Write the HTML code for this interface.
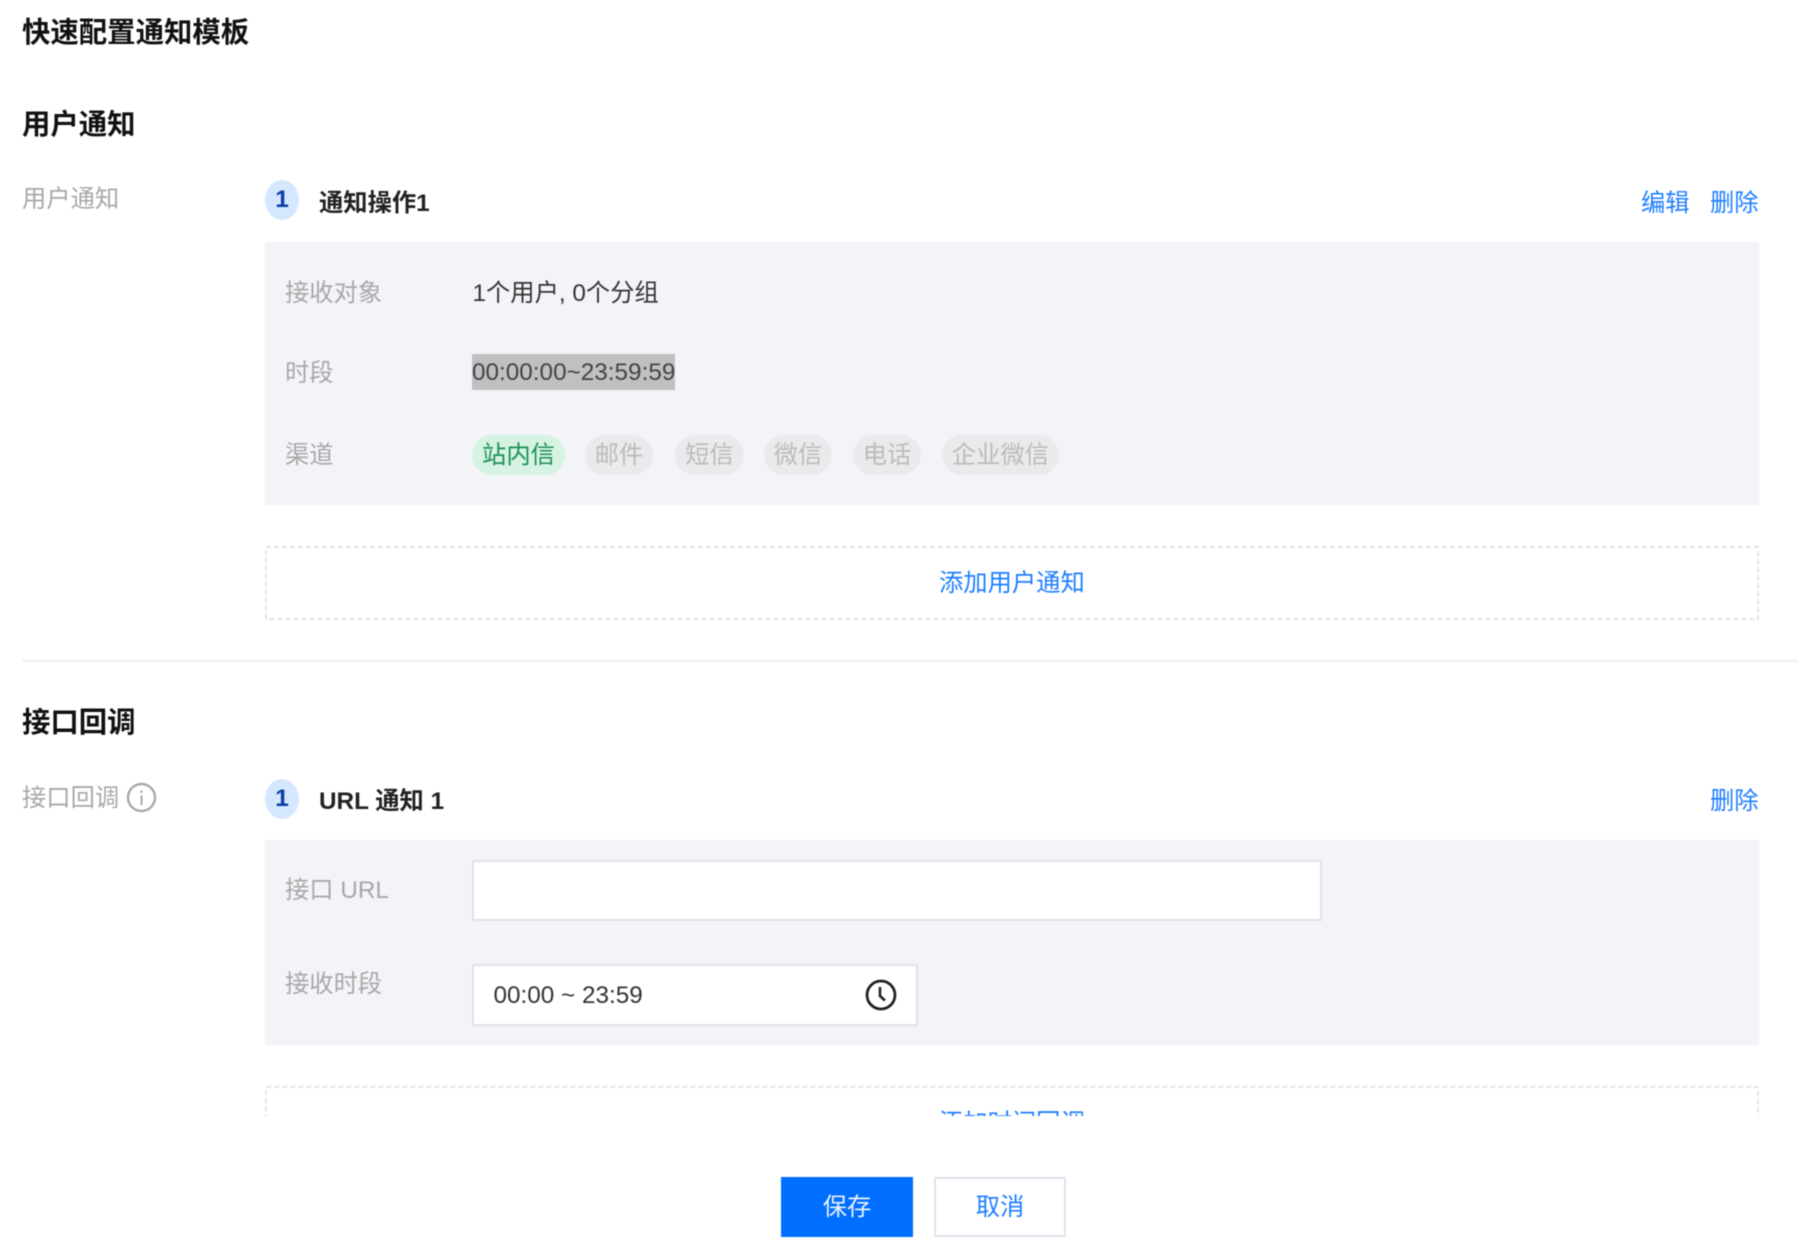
<!DOCTYPE html>
<html lang="zh"><head><meta charset="utf-8"><title>快速配置通知模板</title>
<style>
*{box-sizing:border-box}
html,body{margin:0;padding:0;width:1798px;height:1249px;overflow:hidden;background:#fff}
body{position:relative;font-family:"Liberation Sans","Noto Sans CJK SC",sans-serif;font-size:24.3px;color:#222}
#w{position:absolute;left:0;top:0;width:1798px;height:1249px;filter:blur(.45px)}
.a{position:absolute}
.t{position:absolute;height:40px;line-height:40px;white-space:nowrap}
.h{font-weight:700;font-size:28.4px;color:#111}
.l{color:#a8a8a8}
.v{color:#333}
.b{color:#1f7fff}
.n{position:absolute;left:265px;width:34px;height:40px;border-radius:50%;background:#d5e7ff;color:#0b3ca8;text-align:center;line-height:40px;font-weight:700}
.p{position:absolute;left:265px;width:1494px;background:#f2f4f8}
.tag{position:absolute;top:435px;height:40px;line-height:42px;border-radius:20px;background:#e9eaec;color:#bbb;text-align:center}
.i{position:absolute;background:#fff;border:2px solid #dfe2ea}
.btn{position:absolute;top:1177px;width:132px;height:60px;line-height:61px;text-align:center}
</style></head><body><div id="w">
<div class="t h" style="left:22px;top:13px">快速配置通知模板</div>
<div class="t h" style="left:22px;top:105px">用户通知</div>
<div class="t l" style="left:22px;top:180px">用户通知</div>
<div class="n" style="top:180px">1</div>
<div class="t" style="left:319px;top:184px;font-weight:700;color:#222">通知操作1</div>
<div class="t b" style="left:1641px;top:184px">编辑</div>
<div class="t b" style="left:1710px;top:184px">删除</div>

<div class="p" style="top:242px;height:263px"></div>
<div class="t l" style="left:285px;top:274px">接收对象</div>
<div class="t v" style="left:472.5px;top:274px">1个用户, 0个分组</div>
<div class="t l" style="left:285px;top:354px">时段</div>
<div class="a" style="left:472px;top:354px;width:203px;height:36px;background:#bfc0c2"></div>
<div class="t" style="left:472px;top:353px;color:#444">00:00:00~23:59:59</div>
<div class="t l" style="left:285px;top:436px">渠道</div>
<div class="tag" style="left:472px;width:93px;background:#d5f2e2;color:#1f9058">站内信</div>
<div class="tag" style="left:585px;width:68px">邮件</div>
<div class="tag" style="left:675px;width:69px">短信</div>
<div class="tag" style="left:764px;width:68px">微信</div>
<div class="tag" style="left:853px;width:68px">电话</div>
<div class="tag" style="left:942px;width:117px">企业微信</div>

<svg class="a" style="left:265px;top:546px" width="1495" height="74"><rect x="1" y="1" width="1492" height="72" fill="none" stroke="#dedede" stroke-width="1.5" stroke-dasharray="5 3"/></svg>
<div class="t b" style="left:939px;top:564px">添加用户通知</div>
<div class="a" style="left:22px;top:660px;width:1776px;height:2px;background:#eef0f4"></div>

<div class="t h" style="left:22px;top:703px">接口回调</div>
<div class="t l" style="left:22px;top:779px">接口回调</div>
<svg class="a" style="left:126px;top:782px" width="31" height="31" viewBox="0 0 31 31" fill="none"><circle cx="15.5" cy="15.5" r="13.5" stroke="#a9a9a9" stroke-width="2.4"/><path d="M15.5 13.5V23" stroke="#a9a9a9" stroke-width="2"/><path d="M15.5 8.5v2.4" stroke="#a9a9a9" stroke-width="2"/></svg>
<div class="n" style="top:779px">1</div>
<div class="t" style="left:319px;top:782px;font-weight:700;color:#222">URL 通知 1</div>
<div class="t b" style="left:1710px;top:782px">删除</div>

<div class="p" style="top:840px;height:205px"></div>
<div class="t l" style="left:285px;top:871px">接口 URL</div>
<div class="i" style="left:472px;top:860px;width:850px;height:61px"></div>
<div class="t l" style="left:285px;top:965px">接收时段</div>
<div class="i" style="left:472px;top:964px;width:446px;height:62px"></div>
<div class="t v" style="left:493.5px;top:976px">00:00 ~ 23:59</div>
<svg class="a" style="left:865px;top:979px" width="32" height="32" viewBox="0 0 32 32" fill="none"><circle cx="16" cy="16" r="14" stroke="#222" stroke-width="2.8"/><path d="M15 8v9l5 4.5" stroke="#222" stroke-width="2.6"/></svg>

<div class="a" style="left:0;top:1086px;width:1798px;height:30px;overflow:hidden">
<svg class="a" style="left:265px;top:0" width="1495" height="74"><rect x="1" y="1" width="1492" height="72" fill="none" stroke="#dedede" stroke-width="1.5" stroke-dasharray="5 3"/></svg>
<div class="t b" style="left:939px;top:18px">添加时间回调</div>
</div>

<div class="btn" style="left:781px;background:#006eff;color:#e8f1ff">保存</div>
<div class="btn" style="left:934px;background:#fff;border:2px solid #e0e3ec;color:#1f7fff;line-height:57px">取消</div>
</div></body></html>
